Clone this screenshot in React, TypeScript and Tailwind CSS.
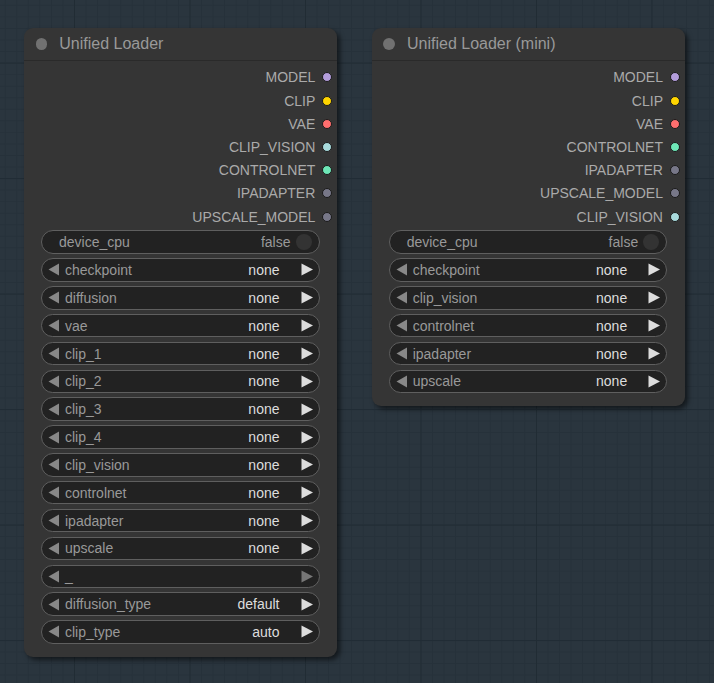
import React from "react";

type Out = { name: string; color: string };
type W =
  | { kind: "toggle"; label: string; value: string }
  | { kind: "combo"; label: string; value: string; left?: boolean; right?: boolean };

const LeftArrow = ({ color }: { color: string }) => (
  <svg width="12" height="13" viewBox="0 0 12 13" className="shrink-0">
    <polygon points="11,0.5 11,12.5 0.5,6.5" fill={color} />
  </svg>
);
const RightArrow = ({ color }: { color: string }) => (
  <svg width="12" height="13" viewBox="0 0 12 13" className="shrink-0">
    <polygon points="0.5,0.5 0.5,12.5 12,6.5" fill={color} />
  </svg>
);

function Widget({ w }: { w: W }) {
  if (w.kind === "toggle") {
    return (
      <div className="h-[23.5px] rounded-full border border-[#5f5f5f] bg-[#222] flex items-center pl-[17px] pr-[7px] text-[14px] leading-none">
        <span className="text-[#999]">{w.label}</span>
        <span className="ml-auto text-[#999] mr-[5px]">{w.value}</span>
        <span className="w-[16px] h-[16px] rounded-full bg-[#333]" />
      </div>
    );
  }
  const lc = w.left ? "#ddd" : "#888";
  const rc = w.right === false ? "#777" : "#ddd";
  return (
    <div className="h-[23.5px] rounded-full border border-[#5f5f5f] bg-[#222] flex items-center pl-[6px] pr-[6px] text-[14px] leading-none">
      <LeftArrow color={lc} />
      <span className="text-[#999] ml-[5px]">{w.label}</span>
      <span className="ml-auto text-[#ddd] mr-[21px]">{w.value}</span>
      <RightArrow color={rc} />
    </div>
  );
}

function Node({ title, outputs, widgets }: { title: string; outputs: Out[]; widgets: W[] }) {
  return (
    <div className="w-[313px] rounded-[9px] bg-[#353535] shadow-[3px_3px_5px_rgba(0,0,0,0.55)] pb-[12.8px]">
      <div className="h-[33.5px] flex items-center pl-[11.5px] border-b border-[#2a2a2a]">
        <span className="w-[11.5px] h-[11.5px] rounded-full bg-[#717171]" />
        <span className="ml-[12px] text-[16px] text-[#999] leading-none">{title}</span>
      </div>
      <div className="pt-[4.9px] pb-[2.2px] flex flex-col">
        {outputs.map((o) => (
          <div key={o.name} className="h-[23.2px] flex items-center justify-end pr-[5px] text-[14px] leading-none">
            <span className="text-[#aaa]">{o.name}</span>
            <span
              className="ml-[7px] w-[10px] h-[10px] rounded-full border border-[#1a1a1a]"
              style={{ backgroundColor: o.color }}
            />
          </div>
        ))}
      </div>
      <div className="flex flex-col gap-[4.35px] pl-[16.7px] pr-[17.8px]">
        {widgets.map((w, i) => (
          <Widget key={i} w={w} />
        ))}
      </div>
    </div>
  );
}

const C = {
  MODEL: "#b39ddb",
  CLIP: "#ffd500",
  VAE: "#ff6e6e",
  CLIP_VISION: "#a8dadc",
  CONTROLNET: "#6ee7b7",
  IPADAPTER: "#777788",
  UPSCALE_MODEL: "#777788",
};

const combo = (label: string, value = "none", right = true): W => ({ kind: "combo", label, value, right });

export default function App() {
  const leftOuts: Out[] = [
    { name: "MODEL", color: C.MODEL },
    { name: "CLIP", color: C.CLIP },
    { name: "VAE", color: C.VAE },
    { name: "CLIP_VISION", color: C.CLIP_VISION },
    { name: "CONTROLNET", color: C.CONTROLNET },
    { name: "IPADAPTER", color: C.IPADAPTER },
    { name: "UPSCALE_MODEL", color: C.UPSCALE_MODEL },
  ];
  const rightOuts: Out[] = [
    { name: "MODEL", color: C.MODEL },
    { name: "CLIP", color: C.CLIP },
    { name: "VAE", color: C.VAE },
    { name: "CONTROLNET", color: C.CONTROLNET },
    { name: "IPADAPTER", color: C.IPADAPTER },
    { name: "UPSCALE_MODEL", color: C.UPSCALE_MODEL },
    { name: "CLIP_VISION", color: C.CLIP_VISION },
  ];
  const leftWidgets: W[] = [
    { kind: "toggle", label: "device_cpu", value: "false" },
    combo("checkpoint"),
    combo("diffusion"),
    combo("vae"),
    combo("clip_1"),
    combo("clip_2"),
    combo("clip_3"),
    combo("clip_4"),
    combo("clip_vision"),
    combo("controlnet"),
    combo("ipadapter"),
    combo("upscale"),
    combo("_", "", false),
    combo("diffusion_type", "default"),
    combo("clip_type", "auto"),
  ];
  const rightWidgets: W[] = [
    { kind: "toggle", label: "device_cpu", value: "false" },
    combo("checkpoint"),
    combo("clip_vision"),
    combo("controlnet"),
    combo("ipadapter"),
    combo("upscale"),
  ];
  return (
    <div
      className="w-[714px] h-[683px] overflow-hidden bg-[#2a353e] bg-[image:linear-gradient(to_right,#212c34_1px,transparent_1px),linear-gradient(to_bottom,#212c34_1px,transparent_1px),linear-gradient(to_right,#26313a_1px,transparent_1px),linear-gradient(to_bottom,#26313a_1px,transparent_1px)] bg-[size:115.5px_115.5px,115.5px_115.5px,11.55px_11.55px,11.55px_11.55px] bg-[position:74px_62.6px] flex items-start gap-[34.7px] pl-[24.3px] pt-[27.5px]"
      style={{ fontFamily: '"Liberation Sans", Arial, sans-serif' }}
    >
      <Node title="Unified Loader" outputs={leftOuts} widgets={leftWidgets} />
      <Node title="Unified Loader (mini)" outputs={rightOuts} widgets={rightWidgets} />
    </div>
  );
}
